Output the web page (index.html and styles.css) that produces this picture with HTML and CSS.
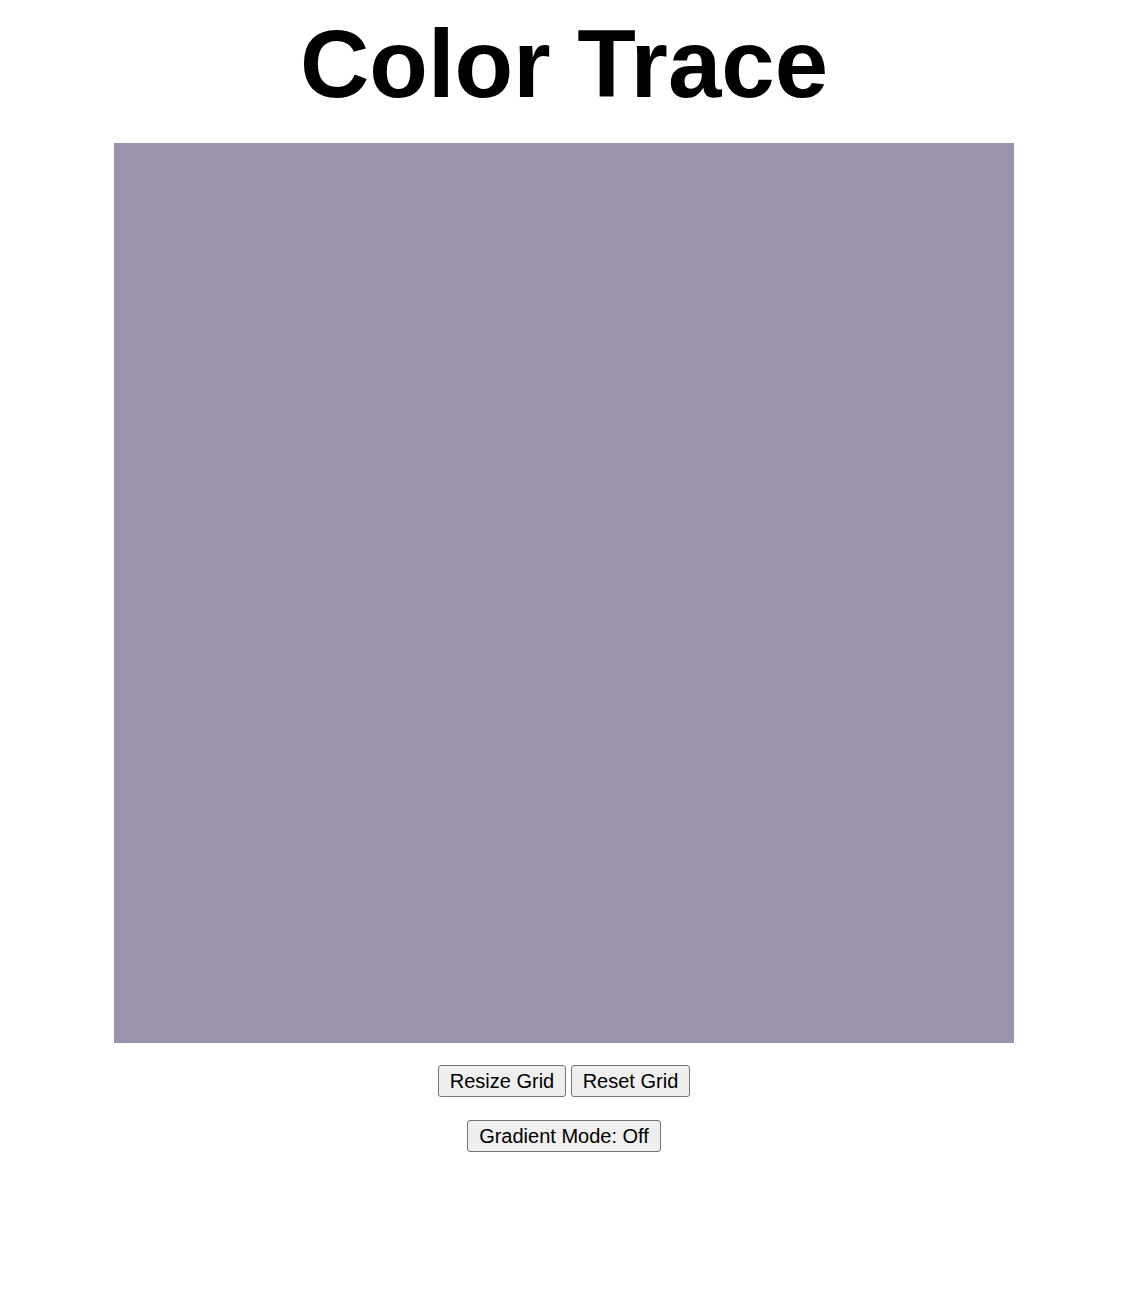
FILE: index.html
```html
<!DOCTYPE html>
<html lang="en">
<head>
<meta charset="utf-8">
<title>Color Trace</title>
<link rel="stylesheet" href="styles.css">
</head>
<body>
<div class="page">
  <h1 class="title">Color Trace</h1>
  <div class="grid"></div>
  <div class="controls">
    <button class="btn">Resize Grid</button>
    <button class="btn">Reset Grid</button>
  </div>
  <div class="controls">
    <button class="btn">Gradient Mode: Off</button>
  </div>
</div>
</body>
</html>
```
FILE: styles.css
```css
html, body {
  margin: 0;
  padding: 0;
  background: #ffffff;
}

body {
  font-family: "Liberation Sans", Arial, sans-serif;
  color: #000000;
}

.page {
  width: 1128px;
  display: flex;
  flex-direction: column;
  align-items: center;
  padding-top: 9px;
}

.title {
  margin: 0;
  font-size: 96px;
  line-height: 110px;
  font-weight: bold;
}

.grid {
  margin-top: 24px;
  width: 900px;
  height: 900px;
  background: #9b93ab;
}

.controls {
  margin-top: 22px;
  text-align: center;
}

.controls + .controls {
  margin-top: 23px;
}

.btn {
  font-family: "Liberation Sans", Arial, sans-serif;
  font-size: 20px;
  line-height: 24px;
  padding: 3px 11px;
  color: #000000;
  background: #efefef;
  border: 1px solid #767676;
  border-radius: 3px;
}
```
